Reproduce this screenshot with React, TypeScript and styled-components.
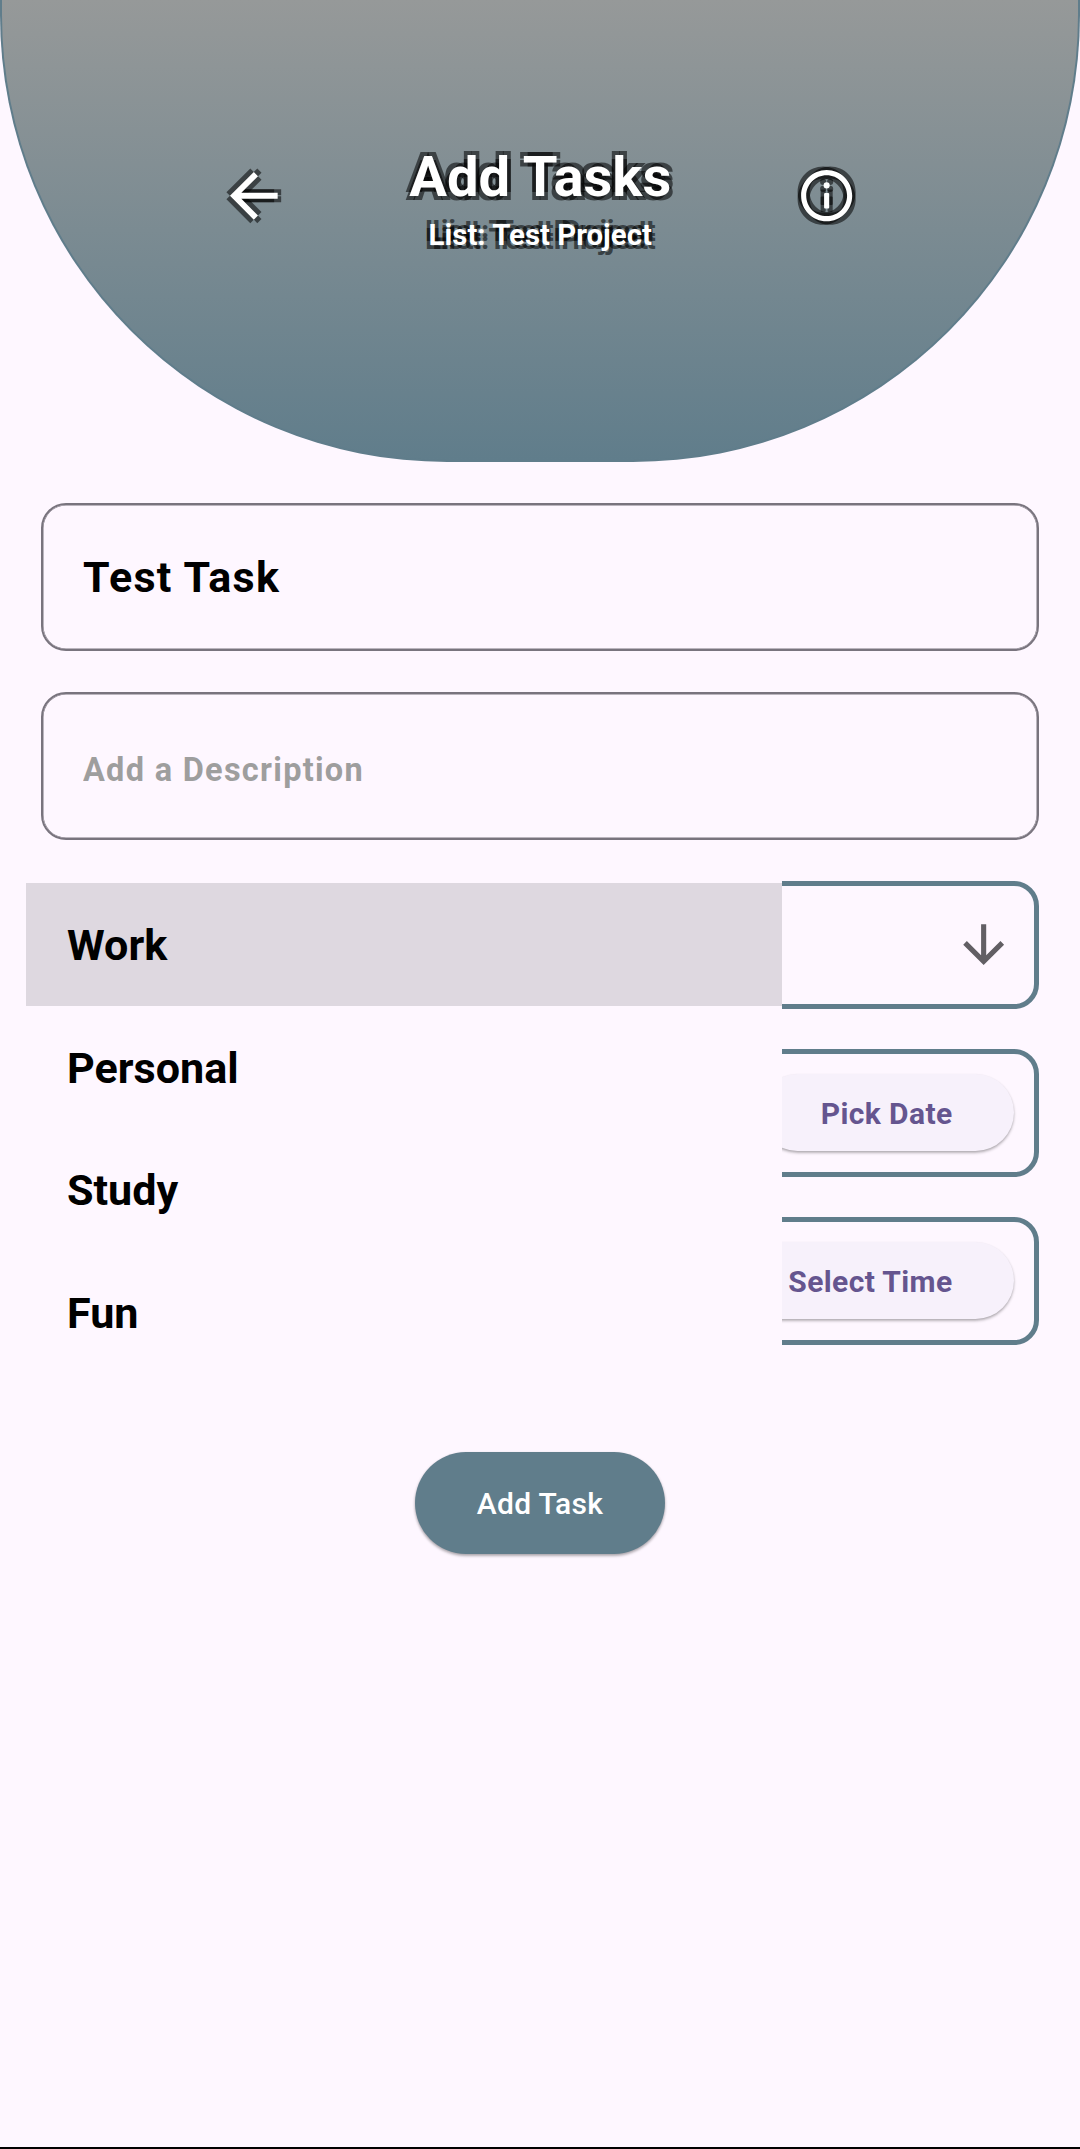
import React from "react";
import styled, { createGlobalStyle, css } from "styled-components";

const colors = {
  surface: "#fef7ff",
  slate: "#607d8b",
  outline: "#79747e",
  primary: "#65558f",
};

const GlobalStyle = createGlobalStyle`
  html, body { margin: 0; background: ${colors.surface}; }
  *, *::before, *::after { box-sizing: border-box; }
  button, input { font: inherit; margin: 0; }
`;

const Screen = styled.main`
  display: flex;
  flex-direction: column;
  width: 1080px;
  height: 2149px;
  overflow: hidden;
  background: ${colors.surface};
  border-bottom: 2px solid #000;
  font-family: Roboto, "Liberation Sans", sans-serif;
  font-weight: 700;
  color: #000;
`;

const Header = styled.header`
  display: grid;
  grid-template-columns: 72px 1fr 62px;
  flex: none;
  height: 462px;
  padding: 149px 220.5px 0 216px;
  border: 2px solid ${colors.slate};
  border-top: 0;
  border-radius: 0 0 447px 447px;
  background: linear-gradient(#969999, ${colors.slate});
`;

const outlineShadow = (reach: number) => css`
  text-shadow:
    -${reach}px -${reach}px rgba(0, 0, 0, 0.54),
    ${reach}px -${reach}px rgba(0, 0, 0, 0.54),
    ${reach}px ${reach}px rgba(0, 0, 0, 0.54),
    -${reach}px ${reach}px rgba(0, 0, 0, 0.54);
`;

const TitleGroup = styled.div`
  display: flex;
  flex-direction: column;
  align-items: center;
  margin-left: -5px;
  color: #fff;
`;

const Title = styled.h1`
  margin: -5px 0 0;
  font-size: 56.2px;
  line-height: 66px;
  white-space: nowrap;
  ${outlineShadow(3.7)}
`;

const Subtitle = styled.p`
  margin: 8px 0 0;
  font-size: 29.4px;
  line-height: 34px;
  white-space: nowrap;
  ${outlineShadow(3.7)}
`;

const IconButton = styled.button<{ $size: number; $top: number }>`
  display: flex;
  width: ${(p) => p.$size}px;
  height: ${(p) => p.$size}px;
  margin-top: ${(p) => p.$top}px;
  padding: 0;
  border: 0;
  background: none;
`;

const Glyph = styled.svg<{ $size: number }>`
  display: block;
  flex: none;
  width: ${(p) => p.$size}px;
  height: ${(p) => p.$size}px;
  overflow: visible;
`;

const Form = styled.form`
  display: flex;
  flex-direction: column;
  align-items: center;
  padding: 41px 41px 0;
`;

const Field = styled.input`
  width: 100%;
  height: 148px;
  margin-bottom: 41px;
  padding: 0 40px;
  border: 2px solid ${colors.outline};
  border-radius: 25px;
  outline: 0;
  background: transparent;
  box-shadow: inset 0 0 0 0.5px ${colors.outline};
  color: #000;
  font-size: 43px;
  letter-spacing: 1.28px;
  &::placeholder {
    color: #9e9e9e;
    opacity: 1;
    font-size: 32.5px;
  }
`;

const Pickers = styled.div`
  position: relative;
  display: flex;
  flex-direction: column;
  gap: 40.5px;
  width: 100%;
`;

const Row = styled.div`
  display: flex;
  align-items: center;
  justify-content: flex-end;
  height: 127.5px;
  padding-right: 20px;
  border: 5px solid ${colors.slate};
  border-radius: 25px;
`;

const pill = css`
  display: flex;
  align-items: center;
  justify-content: center;
  border: 0;
  border-radius: 60px;
  font-size: 30px;
  white-space: nowrap;
`;

const TonalButton = styled.button`
  ${pill}
  height: 77px;
  padding: 2px 61.5px 0;
  background: #f7f1fb;
  color: ${colors.primary};
  letter-spacing: 0.38px;
  box-shadow: 0 2px 3px rgba(0, 0, 0, 0.26), 0 1px 2px rgba(0, 0, 0, 0.08);
`;

const SubmitButton = styled.button`
  ${pill}
  width: 250px;
  height: 102px;
  margin-top: 107.5px;
  background: ${colors.slate};
  color: #fff;
  font-weight: 500;
  letter-spacing: 0.3px;
  box-shadow: 0 2px 3px rgba(0, 0, 0, 0.26), 0 1px 3px rgba(0, 0, 0, 0.12);
`;

const Menu = styled.ul`
  position: absolute;
  top: -2px;
  left: -15px;
  width: 756px;
  margin: 0;
  padding: 4.3px 0 0;
  list-style: none;
  background: ${colors.surface};
`;

const MenuItem = styled.li<{ $selected?: boolean }>`
  display: flex;
  align-items: center;
  height: 122.7px;
  padding: 1.5px 0 0 41px;
  background: ${(p) => (p.$selected ? "#ded8e0" : "transparent")};
  font-size: 43.1px;
`;

const shadowOffsets = [
  [-1, -1],
  [1, -1],
  [1, 1],
  [-1, 1],
];

function OutlinedGlyph({ path, size, reach }: { path: string; size: number; reach: number }) {
  const d = (reach * 24) / size;
  return (
    <Glyph $size={size} viewBox="0 0 24 24" aria-hidden>
      {shadowOffsets.map(([x, y]) => (
        <path key={`${x}${y}`} d={path} fill="#000" fillOpacity={0.54} transform={`translate(${x * d} ${y * d})`} />
      ))}
      <path d={path} fill="#fff" />
    </Glyph>
  );
}

const backPath = "M20 11H7.83l5.59-5.59L12 4l-8 8 8 8 1.41-1.41L7.83 13H20z";
const infoPath =
  "M12 2C6.48 2 2 6.48 2 12s4.48 10 10 10 10-4.48 10-10S17.52 2 12 2zm0 18c-4.41 0-8-3.59-8-8s3.59-8 8-8 8 3.59 8 8-3.59 8-8 8zM11.4 11h1.2q.4 0 .4.4v5.2q0 .4-.4.4h-1.2q-.4 0-.4-.4v-5.2q0-.4.4-.4zM12 6.8a1.2 1.2 0 1 1 0 2.4 1.2 1.2 0 0 1 0-2.4z";
const downPath = "M20 12l-1.41-1.41L13 16.17V4h-2v12.17l-5.58-5.59L4 12l8 8z";

const categories = ["Work", "Personal", "Study", "Fun"];

export default function App() {
  return (
    <>
      <GlobalStyle />
      <Screen>
        <Header>
          <IconButton $size={72} $top={11} aria-label="Back">
            <OutlinedGlyph path={backPath} size={71.6} reach={3.5} />
          </IconButton>
          <TitleGroup>
            <Title>Add Tasks</Title>
            <Subtitle>List: Test Project</Subtitle>
          </TitleGroup>
          <IconButton $size={62} $top={16} aria-label="Information">
            <OutlinedGlyph path={infoPath} size={61.3} reach={3.5} />
          </IconButton>
        </Header>
        <Form onSubmit={(e) => e.preventDefault()}>
          <Field defaultValue="Test Task" spellCheck={false} />
          <Field placeholder="Add a Description" />
          <Pickers>
            <Row>
              <Glyph $size={61.3} viewBox="0 0 24 24" aria-hidden>
                <path d={downPath} fill="#625f64" />
              </Glyph>
            </Row>
            <Row>
              <TonalButton type="button">Pick Date</TonalButton>
            </Row>
            <Row>
              <TonalButton type="button">Select Time</TonalButton>
            </Row>
            <Menu>
              {categories.map((name, i) => (
                <MenuItem key={name} $selected={i === 0}>
                  {name}
                </MenuItem>
              ))}
            </Menu>
          </Pickers>
          <SubmitButton type="submit">Add Task</SubmitButton>
        </Form>
      </Screen>
    </>
  );
}
